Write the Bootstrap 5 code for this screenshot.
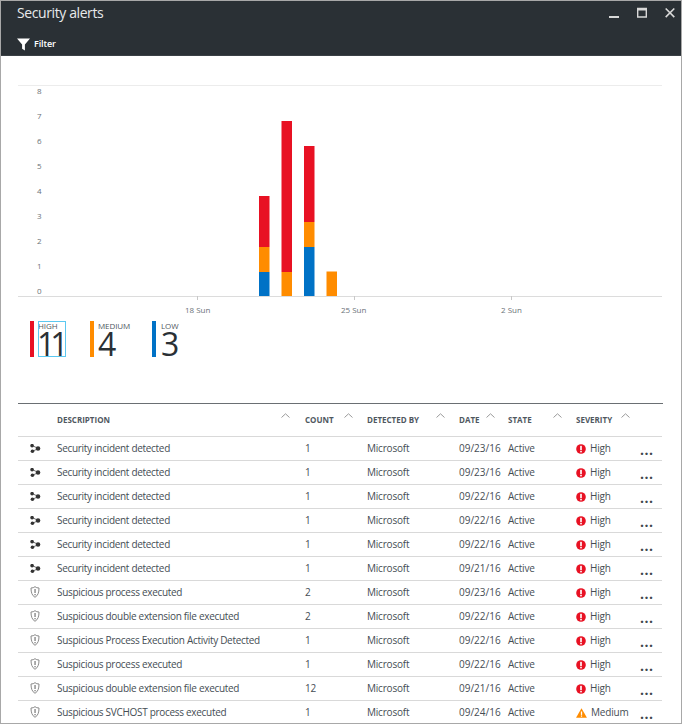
<!doctype html>
<html lang="en">
  <head>
    <meta charset="UTF-8" />
    <meta name="viewport" content="width=device-width, initial-scale=1" />
    <title>Security alerts</title>
    <link href="https://cdn.jsdelivr.net/npm/bootstrap@5.3.0/dist/css/bootstrap.min.css" rel="stylesheet" />
    <style>
      html, body { height: 100%; overflow: hidden; }
      body { font-family: "Open Sans", "Noto Sans", sans-serif; background: #fff; color: #3c4650; }
      .blade { width: 682px; height: 724px; border: 1px solid #a8a8a8; overflow: hidden; }
      .blade-head { height: 55px; background: #2a3035; color: #fff; padding: 0 6px 0 16px; border-bottom: 1px solid #3a4045; }
      .blade-title { font-size: 14px; letter-spacing: -.4px; line-height: 22px; padding-top: 1px; color: #e8eaeb; }
      .win-btns { gap: 18px; padding-top: 5px; }
      .filter-txt { font-size: 9px; font-weight: 600; line-height: 14px; letter-spacing: -.1px; }
      .chart-box { display: block; margin-top: 19px; }
      .chart-box text { font-family: "Open Sans", sans-serif; font-size: 8px; fill: #6b7278; }
      .legend-wrap { padding-left: 29px; height: 47px; }
      .sev-item { height: 36px; }
      .sev-bar { width: 4px; height: 36px; margin-right: 4px; }
      .sev-name { font-size: 8px; line-height: 10px; color: #50585f; letter-spacing: -.1px; }
      .sev-num { font-size: 32px; line-height: 26px; color: #2a3035; font-weight: 400; }
      .sev-focus { outline: 1px solid #5cc8f0; outline-offset: -1px; width: 28px; }
      .sev-focus .sev-num { letter-spacing: -5px; margin-left: -1px; }
      .low-txt { margin-left: 1px; }
      .bg-high { background: #e81123; }
      .bg-med { background: #ff8c00; }
      .bg-low { background: #0072c6; }
      .alerts-wrap { margin: 35px 18px 0 17px; border-top: 1px solid #6a6f73; }
      .alerts { table-layout: fixed; width: 644px; font-size: 10px; border-collapse: collapse; }
      .alerts th { height: 32px; font-size: 8px; font-weight: 700; color: #50585f; padding: 0; border-bottom: 1px solid #d9d9d9; position: relative; vertical-align: middle; }
      .alerts td { height: 24px; padding: 0; border-bottom: 1px solid #d9d9d9; color: #454d54; vertical-align: middle; white-space: nowrap; letter-spacing: -.2px; }
      .alerts td.desc-cell { letter-spacing: -.3px; }
      .alerts td.date-cell { letter-spacing: 0; }
      .alerts tr:last-child td { border-bottom: 0; }
      .sort-up { position: absolute; top: 9px; width: 9px; height: 5px; }
      .more-dots { font-size: 14px; font-weight: 700; letter-spacing: .5px; line-height: 10px; color: #40474d; position: relative; top: 3px; }
      .row-ico { display: block; margin-left: 12px; }
      .sev-ico { margin-right: 4px; vertical-align: -2px; }
    </style>
  </head>
  <body>
    <div class="blade">
      <!-- Blade header -->
      <div class="blade-head d-flex flex-column justify-content-between">
        <div class="d-flex justify-content-between">
          <div class="blade-title">Security alerts</div>
          <div class="win-btns d-flex align-items-start">
            <svg width="10" height="14" viewBox="0 0 10 14"><rect y="10" width="10" height="2" fill="#d8d8d8"/></svg>
            <svg width="10" height="14" viewBox="0 0 10 14"><path d="M.7 2.500h8.600v8.500H.7z" fill="none" stroke="#d8d8d8" stroke-width="1.400"/><rect y="2" width="10" height="2.500" fill="#d8d8d8"/></svg>
            <svg width="10" height="14" viewBox="0 0 10 14"><path d="M.7 2.500l8.600 8.600M9.300 2.500l-8.600 8.600" stroke="#d8d8d8" stroke-width="1.600"/></svg>
          </div>
        </div>
        <div class="d-flex align-items-center gap-1 pb-1">
          <svg width="13" height="13" viewBox="0 0 13 13"><path d="M0 .5h13L7.900 6.500v6L5.100 10.700V6.500z" fill="#fff"/></svg>
          <span class="filter-txt">Filter</span>
        </div>
      </div>

      <!-- Chart -->
      <svg class="chart-box" width="680" height="246" viewBox="1 75 680 246">
        <line x1="18" x2="662" y1="85.500" y2="85.500" stroke="#ececec"/>
        <line x1="18" x2="662" y1="296.500" y2="296.500" stroke="#dcdcdc"/>
        <g id="yLabels"></g>
        <g id="bars"></g>
        <g stroke="#c8c8c8"><line x1="197.500" x2="197.500" y1="296" y2="300"/><line x1="354.500" x2="354.500" y1="296" y2="300"/><line x1="511.500" x2="511.500" y1="296" y2="300"/></g>
        <text x="185" y="313">18 Sun</text>
        <text x="341" y="313">25 Sun</text>
        <text x="501" y="313">2 Sun</text>
      </svg>

      <!-- Severity totals -->
      <div class="legend-wrap d-flex">
        <div class="sev-item d-flex" style="width:60px"><div class="sev-bar bg-high"></div><div class="sev-focus"><div class="sev-name">HIGH</div><div class="sev-num">11</div></div></div>
        <div class="sev-item d-flex" style="width:62px"><div class="sev-bar bg-med"></div><div><div class="sev-name">MEDIUM</div><div class="sev-num">4</div></div></div>
        <div class="sev-item d-flex"><div class="sev-bar bg-low"></div><div class="low-txt"><div class="sev-name">LOW</div><div class="sev-num">3</div></div></div>
      </div>

      <!-- Alerts list -->
      <div class="alerts-wrap">
        <table class="alerts">
          <colgroup><col style="width:39px"><col style="width:248px"><col style="width:62px"><col style="width:92px"><col style="width:49px"><col style="width:68px"><col style="width:64px"><col style="width:22px"></colgroup>
          <thead>
            <tr id="headRow"></tr>
          </thead>
          <tbody id="rows"></tbody>
        </table>
      </div>
    </div>

    <svg width="0" height="0" class="position-absolute">
      <symbol id="icoGraph" viewBox="0 0 12 10"><path d="M2 1.500L9 5 2 8.500" fill="none" stroke="#333" stroke-width=".8"/><circle cx="2.200" cy="1.900" r="2" fill="#333"/><circle cx="2.600" cy="8" r="2" fill="#333"/><circle cx="8.800" cy="5" r="2.500" fill="#333"/></symbol>
      <symbol id="icoShield" viewBox="0 0 10 12"><path d="M5 .7c1 .9 2.400 1.300 4 1.300 0 4.500-1 7.500-4 9.300C2 9.500 1 6.500 1 2c1.600 0 3-.4 4-1.300z" fill="#fff" stroke="#8a8a8a" stroke-width="1"/><rect x="4.400" y="3" width="1.300" height="4" fill="#808080"/><rect x="4.400" y="8" width="1.300" height="1.300" fill="#808080"/></symbol>
      <symbol id="icoHigh" viewBox="0 0 11 11"><circle cx="5.500" cy="5.500" r="5.300" fill="#e81123"/><rect x="4.600" y="2" width="1.800" height="4.700" fill="#fff"/><rect x="4.600" y="7.500" width="1.800" height="1.700" fill="#fff"/></symbol>
      <symbol id="icoMed" viewBox="0 0 12 11"><path d="M6 .3L12 10.700H0z" fill="#ff8c00"/><rect x="5.300" y="3.800" width="1.400" height="3.800" fill="#fff"/><rect x="5.300" y="8.200" width="1.400" height="1.400" fill="#fff"/></symbol>
    </svg>

    <script>
      // y axis labels
      let yHtml = "";
      for (let i = 0; i <= 8; i++) {
        yHtml += `<text x="37" y="${294 - i * 25}">${i}</text>`;
      }
      document.getElementById("yLabels").innerHTML = yHtml;

      // stacked bars: x, then segments as [top, bottom, colour]
      const HIGH = "#e81123", MED = "#ff8c00", LOW = "#0072c6";
      const bars = [
        [259, [[196, 247, HIGH], [247, 272, MED], [272, 296, LOW]]],
        [281.500, [[121, 272, HIGH], [272, 296, MED]]],
        [304, [[146, 222, HIGH], [222, 247, MED], [247, 296, LOW]]],
        [326.500, [[271.500, 296, MED]]],
      ];
      let barHtml = "";
      bars.forEach(([x, segs]) => {
        segs.forEach(([t, b, c]) => {
          barHtml += `<rect x="${x}" y="${t}" width="10.500" height="${b - t}" fill="${c}"/>`;
        });
      });
      document.getElementById("bars").innerHTML = barHtml;

      // table head
      const heads = [["", 0], ["DESCRIPTION", 263], ["COUNT", 326], ["DETECTED BY", 418], ["DATE", 468], ["STATE", 535], ["SEVERITY", 603], ["", 0]];
      const caret = (x) => `<svg class="sort-up" style="left:${x}px" viewBox="0 0 9 5"><path d="M.5 4.500L4.500.8l4 3.700" fill="none" stroke="#9a9a9a"/></svg>`;
      document.getElementById("headRow").innerHTML = heads
        .map(([t, x], i) => {
          const start = [0, 39, 287, 349, 441, 490, 558, 622][i];
          return `<th>${t}${x ? caret(x - start) : ""}</th>`;
        })
        .join("");

      // alert rows
      const alerts = [
        ["g", "Security incident detected", 1, "09/23/16", "High"],
        ["g", "Security incident detected", 1, "09/23/16", "High"],
        ["g", "Security incident detected", 1, "09/22/16", "High"],
        ["g", "Security incident detected", 1, "09/22/16", "High"],
        ["g", "Security incident detected", 1, "09/22/16", "High"],
        ["g", "Security incident detected", 1, "09/21/16", "High"],
        ["s", "Suspicious process executed", 2, "09/23/16", "High"],
        ["s", "Suspicious double extension file executed", 2, "09/22/16", "High"],
        ["s", "Suspicious Process Execution Activity Detected", 1, "09/22/16", "High"],
        ["s", "Suspicious process executed", 1, "09/22/16", "High"],
        ["s", "Suspicious double extension file executed", 12, "09/21/16", "High"],
        ["s", "Suspicious SVCHOST process executed", 1, "09/24/16", "Medium"],
      ];
      document.getElementById("rows").innerHTML = alerts
        .map(([kind, name, count, date, sev]) => {
          const icon = kind === "g"
            ? `<svg class="row-ico" width="11" height="9"><use href="#icoGraph"/></svg>`
            : `<svg class="row-ico" width="10" height="12"><use href="#icoShield"/></svg>`;
          const sevIcon = sev === "High"
            ? `<svg class="sev-ico" width="10" height="10"><use href="#icoHigh"/></svg>`
            : `<svg class="sev-ico" width="11" height="10"><use href="#icoMed"/></svg>`;
          return `<tr><td>${icon}</td><td class="desc-cell">${name}</td><td>${count}</td><td>Microsoft</td><td class="date-cell">${date}</td><td>Active</td><td>${sevIcon}${sev}</td><td><span class="more-dots">...</span></td></tr>`;
        })
        .join("");
    </script>
    <script src="https://cdn.jsdelivr.net/npm/bootstrap@5.3.0/dist/js/bootstrap.bundle.min.js"></script>
  </body>
</html>
